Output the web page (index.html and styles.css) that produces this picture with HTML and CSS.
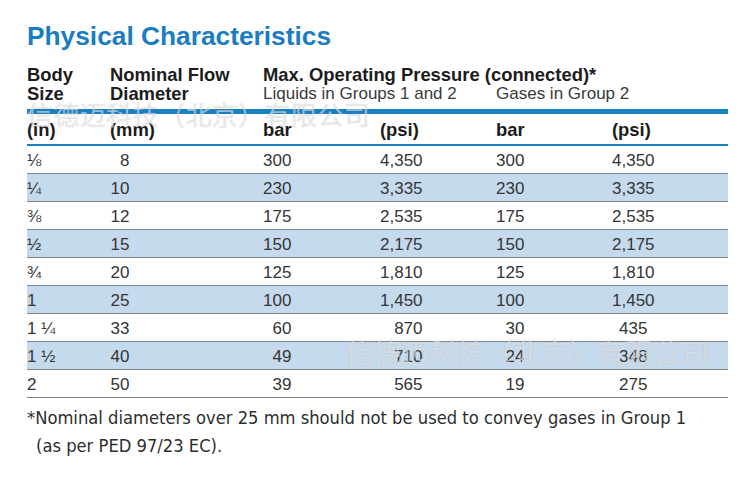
FILE: index.html
```html
<!DOCTYPE html>
<html>
<head>
<meta charset="utf-8">
<link rel="stylesheet" href="styles.css">
</head>
<body>
<div class="page">
  <h1 class="title">Physical Characteristics</h1>
  <table class="spec">
    <colgroup>
      <col class="c1"><col class="c2"><col class="c3"><col class="c4"><col class="c5"><col class="c6">
    </colgroup>
    <thead>
      <tr class="hr1">
        <th rowspan="2" class="stack">Body<br>Size</th>
        <th rowspan="2" class="stack">Nominal Flow<br>Diameter</th>
        <th colspan="4" class="group">Max. Operating Pressure (connected)*</th>
      </tr>
      <tr class="hr2">
        <th colspan="2" class="sub">Liquids in Groups 1 and 2</th>
        <th colspan="2" class="sub">Gases in Group 2</th>
      </tr>
      <tr class="units">
        <th>(in)</th><th>(mm)</th><th>bar</th><th>(psi)</th><th>bar</th><th>(psi)</th>
      </tr>
    </thead>
    <tbody>
      <tr><td>⅛</td><td><span class="n2">8</span></td><td><span class="n3">300</span></td><td><span class="n4">4,350</span></td><td><span class="n3">300</span></td><td><span class="n6">4,350</span></td></tr>
      <tr class="alt"><td>¼</td><td><span class="n2">10</span></td><td><span class="n3">230</span></td><td><span class="n4">3,335</span></td><td><span class="n3">230</span></td><td><span class="n6">3,335</span></td></tr>
      <tr><td>⅜</td><td><span class="n2">12</span></td><td><span class="n3">175</span></td><td><span class="n4">2,535</span></td><td><span class="n3">175</span></td><td><span class="n6">2,535</span></td></tr>
      <tr class="alt"><td>½</td><td><span class="n2">15</span></td><td><span class="n3">150</span></td><td><span class="n4">2,175</span></td><td><span class="n3">150</span></td><td><span class="n6">2,175</span></td></tr>
      <tr><td>¾</td><td><span class="n2">20</span></td><td><span class="n3">125</span></td><td><span class="n4">1,810</span></td><td><span class="n3">125</span></td><td><span class="n6">1,810</span></td></tr>
      <tr class="alt"><td>1</td><td><span class="n2">25</span></td><td><span class="n3">100</span></td><td><span class="n4">1,450</span></td><td><span class="n3">100</span></td><td><span class="n6">1,450</span></td></tr>
      <tr><td>1 ¼</td><td><span class="n2">33</span></td><td><span class="n3">60</span></td><td><span class="n4">870</span></td><td><span class="n3">30</span></td><td><span class="n6">435</span></td></tr>
      <tr class="alt"><td>1 ½</td><td><span class="n2">40</span></td><td><span class="n3">49</span></td><td><span class="n4">710</span></td><td><span class="n3">24</span></td><td><span class="n6">348</span></td></tr>
      <tr><td>2</td><td><span class="n2">50</span></td><td><span class="n3">39</span></td><td><span class="n4">565</span></td><td><span class="n3">19</span></td><td><span class="n6">275</span></td></tr>
    </tbody>
  </table>
  <p class="note">*Nominal diameters over 25 mm should not be used to convey gases in Group 1<br>(as per PED 97/23 EC).</p>
  <div class="wm wm-top">信德迈科技（北京）有限公司</div>
  <div class="wm wm-mid">信德迈科技（北京）有限公司</div>
</div>
</body>
</html>
```

FILE: styles.css
```css
html, body {
  margin: 0;
  padding: 0;
  background: #ffffff;
}

.page {
  position: relative;
  width: 740px;
  height: 482px;
  padding: 21px 0 0 27px;
  box-sizing: border-box;
  font-family: "Liberation Sans", Arial, sans-serif;
  color: #333333;
  overflow: hidden;
}

.title {
  margin: 0;
  font-size: 26.3px;
  line-height: 30px;
  font-weight: bold;
  color: #1a7cc1;
}

.spec {
  margin-top: 14px;
  width: 701px;
  border-collapse: collapse;
  table-layout: fixed;
  font-size: 17px;
}

.c1 { width: 83px; }
.c2 { width: 153px; }
.c3 { width: 117px; }
.c4 { width: 116px; }
.c5 { width: 116px; }
.c6 { width: 116px; }

.spec th,
.spec td {
  padding: 0;
  text-align: left;
  font-weight: normal;
  white-space: nowrap;
}

.spec thead th {
  color: #1c1c1c;
}

.stack {
  font-size: 18.4px;
  font-weight: bold !important;
  line-height: 19px;
  vertical-align: top;
  padding-bottom: 6px !important;
}

.hr1 th.group {
  font-size: 18.4px;
  font-weight: bold;
  line-height: 19px;
  height: 19px;
  vertical-align: top;
}

.hr2 th.sub {
  font-size: 17px;
  line-height: 19px;
  height: 19px;
  vertical-align: top;
  color: #3a3a3a;
  padding-bottom: 6px;
}

.units th {
  border-top: 5px solid #1a80c4;
  border-bottom: 2px solid #1a80c4;
  height: 29px;
  font-size: 18.4px;
  font-weight: bold;
  line-height: 19px;
  vertical-align: middle;
  padding-top: 1px;
}

.spec tbody td {
  height: 26px;
  border-bottom: 1px solid #7d858c;
  line-height: 19px;
  vertical-align: middle;
  padding-top: 1px;
  color: #353535;
}

.spec tbody tr.alt td {
  background: #c6daee;
}

.n2, .n3, .n4, .n6 {
  display: inline-block;
  text-align: right;
}
.n2 { width: 2.05ch; }
.n3 { width: 3ch; }
.n4 { width: 4.5ch; }
.n6 { width: 4.5ch; text-align: center; }

.note {
  margin: 6px 0 0 0;
  width: 700px;
  padding-left: 9px;
  text-indent: -9px;
  font-family: "DejaVu Sans", "Liberation Sans", sans-serif;
  font-stretch: condensed;
  font-size: 18.2px;
  line-height: 28px;
  color: #2e2e2e;
  white-space: nowrap;
}

.wm {
  position: absolute;
  font-family: "Noto Sans CJK SC", sans-serif;
  color: rgba(255, 255, 255, 0.5);
  text-shadow: 0 0 1px rgba(110, 110, 110, 0.35);
  white-space: nowrap;
  pointer-events: none;
}

.wm-top {
  left: 27px;
  top: 99px;
  font-size: 26px;
  line-height: 30px;
  letter-spacing: 0.4px;
}

.wm-mid {
  left: 345px;
  top: 336px;
  font-size: 28px;
  line-height: 32px;
}
```
